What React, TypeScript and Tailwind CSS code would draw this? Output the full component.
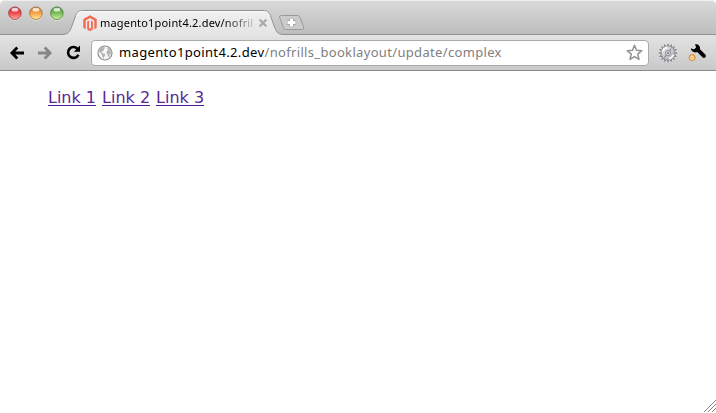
import type { ReactNode } from "react";

const lights = [
  { id: "close", edge: "#8f3a3c", top: "#b93238", mid: "#f04a50", low: "#ffa9a0" },
  { id: "minimise", edge: "#98622f", top: "#c9752f", mid: "#f5a548", low: "#ffee9a" },
  { id: "zoom", edge: "#4a7539", top: "#4a8c3c", mid: "#7bbd5a", low: "#d2f29e" },
];

function TrafficLight({ id, edge, top, mid, low }: (typeof lights)[number]) {
  return (
    <svg width="15" height="16" viewBox="0 0 15 16">
      <defs>
        <linearGradient id={id} x1="0" y1="0" x2="0" y2="1">
          <stop offset="0" stopColor={top} />
          <stop offset=".5" stopColor={mid} />
          <stop offset="1" stopColor={low} />
        </linearGradient>
      </defs>
      <circle cx="7.9" cy="9.2" r="6.6" fill="#fff" opacity=".5" />
      <circle cx="7.9" cy="8.2" r="6.3" fill={`url(#${id})`} stroke={edge} strokeOpacity=".75" />
      <ellipse cx="7.9" cy="4.7" rx="3.4" ry="1.9" fill="#fff" opacity=".75" />
    </svg>
  );
}

function MagentoLogo() {
  return (
    <svg width="14" height="17" viewBox="0 0 14 17" fill="#f26b4e">
      <path d="M7 .3 13.7 4v8.8l-2.4 1.4V5.5L7 3.1 2.7 5.5v8.7L.3 12.8V4z" />
      <path d="M4.2 6.4 6 5.5v7.6l1 .6 1-.6V5.5l1.8.9v8.1L7 16.2l-2.8-1.7z" />
    </svg>
  );
}

function Tab() {
  return (
    <div className="relative h-[26px] w-[222px]">
      <svg className="absolute inset-0" width="222" height="27" viewBox="0 0 222 27">
        <defs>
          <linearGradient id="tab" x1="0" y1="0" x2="0" y2="1">
            <stop offset="0" stopColor="#f0f0f0" />
            <stop offset="1" stopColor="#e3e3e3" />
          </linearGradient>
        </defs>
        <path
          d="M0 24.5C6 24.5 7.5 22 9.3 17.5L13.5 6C15 1.8 17 .5 21 .5H201C205 .5 207 1.8 208.5 6L212.7 17.5C214.5 22 216 24.5 222 24.5V27H0z"
          fill="url(#tab)"
        />
        <path
          d="M0 24.5C6 24.5 7.5 22 9.3 17.5L13.5 6C15 1.8 17 .5 21 .5H201C205 .5 207 1.8 208.5 6L212.7 17.5C214.5 22 216 24.5 222 24.5"
          fill="none"
          stroke="#929292"
        />
        <path d="M14.5 6C16 2.8 17.5 1.5 21 1.5H201C204 1.5 206 2.8 207.5 6" fill="none" stroke="#fafafa" />
      </svg>
      <div className="relative flex h-[26px] items-center pl-[21px]">
        <MagentoLogo />
        <div className="ml-[3px] w-[156px] whitespace-nowrap bg-linear-to-r from-black from-75% to-[#d4d4d4] bg-clip-text font-['Noto_Sans','Open_Sans',sans-serif] text-[11px] leading-[16px] tracking-[0.18px] text-transparent">
          magento1point4.2.dev/nofril
        </div>
        <svg className="ml-[2px]" width="10" height="10" viewBox="0 0 10 10">
          <path d="m1.6 1.6 6.8 6.8m0-6.8L1.6 8.4" stroke="#a8a8a8" strokeWidth="2.1" />
        </svg>
      </div>
    </div>
  );
}

function NewTab() {
  return (
    <svg width="27" height="18" viewBox="0 0 27 18">
      <path d="M3.3 1.5H19.2C20.7 1.5 21.5 2 22 3.3L25.4 12.6C26 14.6 25.4 15.5 23.7 15.5H8.3C6.6 15.5 5.9 14.9 5.3 13.4L1.7 3.6C1.2 2.2 1.7 1.5 3.3 1.5z" fill="#cbcbcb" stroke="#999" />
      <path d="M13.5 3.9v9.2M8.9 8.5h9.2" stroke="#a4a4a4" strokeWidth="4.4" />
      <path d="M13.5 4.5v8M9.5 8.5h8" stroke="#fff" strokeWidth="3" />
    </svg>
  );
}

function Arrow({ right = false }: { right?: boolean }) {
  return (
    <svg className={right ? "-scale-x-100 text-[#868686]" : "text-black"} width="15" height="14" viewBox="0 0 15 14">
      <path d="M7.3 1.5 1.9 7l5.4 5.5M2.5 7H14" fill="none" stroke="currentColor" strokeWidth="2.8" />
    </svg>
  );
}

function Reload() {
  return (
    <svg width="15" height="15" viewBox="0 0 15 15">
      <path d="M11.8 4.2A5.4 5.4 0 1 0 12.4 9.7" fill="none" stroke="#000" strokeWidth="2.6" />
      <path d="M14 .6v6.2H7.8z" />
    </svg>
  );
}

function Globe() {
  return (
    <svg width="16" height="16" viewBox="0 0 16 16">
      <circle cx="8" cy="8" r="7" fill="#f6f6f6" stroke="#8d8d8d" strokeWidth="1.2" />
      <path d="M2.2 5 4 2.7 7.2 2 8 3 6.6 4.2l.4 1.4-2 1-.3 1.3 2.7.7 1 1.4-1.3 1.7-.3 2L5.4 12 4.8 9.3 2.6 7.2zM10 3.2l1.8-.2 1.8 2.6.4 2.8-1.2 1-.8 2.4-1.2-.3-.4-2.6-1.2-1.5.8-1.7 1.3-.5z" fill="#b3b3b3" />
    </svg>
  );
}

function Star() {
  return (
    <svg width="17" height="17" viewBox="0 0 17 17">
      <path d="m8.5 1.3 2 5 5.3.4-4.1 3.4 1.3 5.3-4.5-2.8L4 15.4l1.3-5.3-4.1-3.4 5.3-.4z" fill="#fff" stroke="#929292" strokeWidth="1.5" strokeLinejoin="round" />
    </svg>
  );
}

const teeth = Array.from({ length: 16 }, (_, i) => i * 22.5);

function Gear() {
  return (
    <svg width="20" height="20" viewBox="0 0 20 20">
      <defs>
        <linearGradient id="gear" x1="0" y1="0" x2="1" y2="1">
          <stop offset="0" stopColor="#e6e6ea" />
          <stop offset=".5" stopColor="#cfcfd5" />
          <stop offset="1" stopColor="#a2a2a9" />
        </linearGradient>
      </defs>
      {teeth.map((angle) => (
        <path key={angle} d="M8.7 4 10 .9 11.3 4z" fill="#b4b4ba" stroke="#707076" strokeWidth=".6" transform={`rotate(${angle} 10 10)`} />
      ))}
      <circle cx="10" cy="10" r="6.4" fill="url(#gear)" />
      <path d="M4.6 8.2A5.6 5.6 0 0 1 9 4.4M15.4 11.8A5.6 5.6 0 0 1 11 15.6" fill="none" stroke="#fbfbfd" strokeWidth="1.8" />
      <path d="M13 5.5 11.6 7.8M6.5 14.3 8.2 12.2" stroke="#8c8c93" strokeWidth="1.3" />
      <circle cx="10" cy="10" r="2.6" fill="#d2d2d6" stroke="#8a8a91" strokeWidth=".9" />
      <circle cx="10" cy="10" r=".9" fill="#707077" />
    </svg>
  );
}

function Wrench() {
  return (
    <svg width="19" height="19" viewBox="0 0 19 19">
      <defs>
        <linearGradient id="notice" x1="0" y1="0" x2="0" y2="1">
          <stop offset="0" stopColor="#f29b3c" />
          <stop offset="1" stopColor="#ffe3a2" />
        </linearGradient>
      </defs>
      <path d="M7 1.4C10 .6 12.5 2.8 12 6.2l5.3 5.3c1.8 2-.8 4.6-2.8 2.8L9.2 9.1C6.3 10 3.1 8.8 2.8 5.3l3.2 1.1L8.2 4.2z" />
      <circle cx="4.2" cy="14.6" r="3.1" fill="url(#notice)" stroke="#c47d35" strokeWidth=".8" />
      <ellipse cx="3.9" cy="13.2" rx="1.4" ry=".8" fill="#fff" opacity=".7" />
    </svg>
  );
}

function PageLink({ children }: { children: ReactNode }) {
  return (
    <a href="#" className="border-b border-[#551a8b] leading-[15px] text-[#5a268f]">
      {children}
    </a>
  );
}

export default function App() {
  return (
    <div className="flex h-[413px] w-[716px] flex-col overflow-hidden bg-white">
      <header className="rounded-t-[5px] bg-[#e3e3e3]">
        <div className="flex h-[35px] items-start rounded-t-[5px] border-t border-[#eeeeee] border-b border-b-[#929292] bg-linear-to-b from-[#d9d9d9] to-[#bdbdbd]">
          <div className="flex gap-[6px] pt-[4px] pl-[7px]">
            {lights.map((light) => (
              <TrafficLight key={light.id} {...light} />
            ))}
          </div>
          <div className="-ml-[2px] pt-[9px]">
            <Tab />
          </div>
          <div className="-ml-[6px] pt-[13px]">
            <NewTab />
          </div>
        </div>
        <div className="flex h-[36px] items-center border-b border-[#8a8a8a] bg-linear-to-b from-[#e3e3e3] to-[#c9c9c9] pl-[10px]">
          <div className="flex items-center">
            <Arrow />
            <div className="ml-[12px]"><Arrow right /></div>
            <div className="ml-[14px]"><Reload /></div>
          </div>
          <div className="ml-[10px] flex h-[26px] w-[558px] items-center rounded-[4px] border border-[#aaaaaa] bg-white pl-[5px]">
            <Globe />
            <div className="ml-[6px] flex-1 whitespace-nowrap pb-[2px] font-['Noto_Sans','Open_Sans',sans-serif] text-[13px] leading-[20px] tracking-[0.33px] text-[#808080]">
              <span className="tracking-[0.36px] text-black">magento1point4.2.dev</span>/nofrills_booklayout/update/complex
            </div>
            <div className="mr-[5px]"><Star /></div>
          </div>
          <div className="ml-[9px] flex items-center gap-[10px]">
            <Gear />
            <Wrench />
          </div>
        </div>
      </header>
      <main className="flex flex-1 flex-col justify-between">
        <nav className="flex gap-[6px] pt-[19px] pl-[48px] font-['DejaVu_Sans',Verdana,sans-serif] text-[16px]">
          <PageLink>Link 1</PageLink>
          <PageLink>Link 2</PageLink>
          <PageLink>Link 3</PageLink>
        </nav>
        <svg className="mb-px self-end" width="12" height="12" viewBox="0 0 12 12">
          <path d="M0 12 12 0M4 12l8-8M8 12l4-4" stroke="#888" strokeWidth="1" />
        </svg>
      </main>
    </div>
  );
}
